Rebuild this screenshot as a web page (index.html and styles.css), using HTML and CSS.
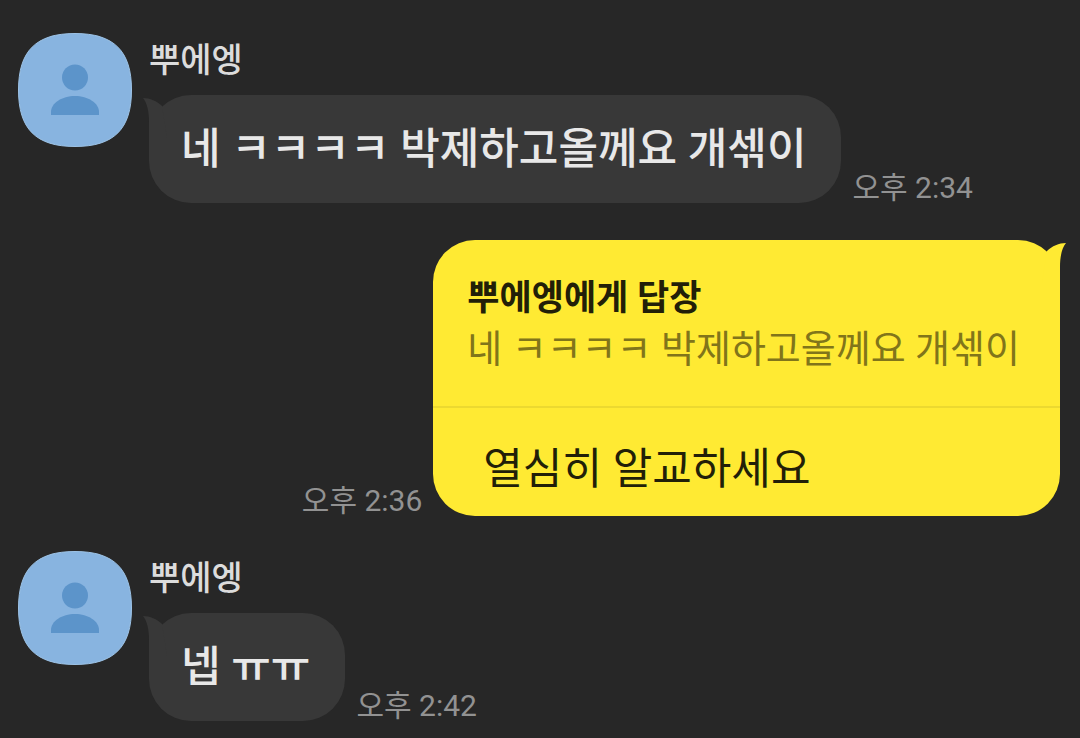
FILE: index.html
```html
<!DOCTYPE html>
<html lang="ko">

<head>
    <meta charset="UTF-8">
    <meta name="viewport" content="width=device-width, initial-scale=1.0">
    <title>뿌에엥</title>
    <link rel="stylesheet" href="styles.css">
</head>

<body>
    <main class="chat">
        <div class="message">
            <svg class="avatar" viewBox="0 0 114 114">
                <path class="avatar-bg" d="M57 .5C96 .5 113.500 18 113.500 57S96 113.500 57 113.500.5 96 .5 57 18 .5 57 .5z" />
                <circle class="avatar-person" cx="57" cy="44.500" r="13" />
                <path class="avatar-person" d="M33 82v-3C33 70 44 63 57 63s24 7 24 16v3z" />
            </svg>
            <div class="content">
                <div class="name">뿌에엥</div>
                <div class="line">
                    <div class="bubble">
                        <svg class="tail" viewBox="0 0 24 40">
                            <path d="M0 0C7 0 14 3 19 8L24 40H6V24C6 13 4 5 0 0z" />
                        </svg>
                        네 ㅋㅋㅋㅋ 박제하고올께요 개섺이
                    </div>
                    <time class="time">오후 2:34</time>
                </div>
            </div>
        </div>

        <div class="message mine">
            <div class="line">
                <time class="time">오후 2:36</time>
                <div class="bubble">
                    <svg class="tail" viewBox="0 0 24 40">
                        <path d="M24 0C17 0 10 3 5 8L0 40H18V24C18 13 20 5 24 0z" />
                    </svg>
                    <div class="reply">
                        <div class="reply-title">뿌에엥에게 답장</div>
                        <div class="reply-text">네 ㅋㅋㅋㅋ 박제하고올께요 개섺이</div>
                    </div>
                    <div class="answer">열심히 알교하세요</div>
                </div>
            </div>
        </div>

        <div class="message">
            <svg class="avatar" viewBox="0 0 114 114">
                <path class="avatar-bg" d="M57 .5C96 .5 113.500 18 113.500 57S96 113.500 57 113.500.5 96 .5 57 18 .5 57 .5z" />
                <circle class="avatar-person" cx="57" cy="44.500" r="13" />
                <path class="avatar-person" d="M33 82v-3C33 70 44 63 57 63s24 7 24 16v3z" />
            </svg>
            <div class="content">
                <div class="name">뿌에엥</div>
                <div class="line">
                    <div class="bubble">
                        <svg class="tail" viewBox="0 0 24 40">
                            <path d="M0 0C7 0 14 3 19 8L24 40H6V24C6 13 4 5 0 0z" />
                        </svg>
                        넵 ㅠㅠ
                    </div>
                    <time class="time">오후 2:42</time>
                </div>
            </div>
        </div>
    </main>
</body>

</html>
```
FILE: styles.css
```css
body {
    margin: 0;
    background-color: #272727;
    font-family: Roboto, "Noto Sans CJK KR", sans-serif;
}

.chat {
    padding: 33px 20px 17px 18px;
}

.message {
    display: flex;
    align-items: flex-start;
    gap: 17px;
}

.mine {
    justify-content: flex-end;
    margin: 37px 0 35px;
}

.avatar {
    flex: none;
    width: 114px;
    height: 114px;
}

.avatar-bg {
    fill: #88b4e0;
    stroke: #9dc3e6;
}

.avatar-person {
    fill: #5c94ca;
}

.name {
    margin-bottom: 8px;
    font-size: 34px;
    font-weight: 500;
    line-height: 54px;
    color: #dcdcdc;
}

.line {
    display: flex;
    align-items: flex-end;
    gap: 11px;
}

.bubble {
    position: relative;
    padding: 32px 35px 32px 32px;
    border-radius: 42px;
    background-color: #383838;
    color: #e8e8e8;
    font-size: 43px;
    font-weight: 500;
    line-height: 44px;
}

.tail {
    position: absolute;
    top: 3px;
    left: -6px;
    width: 24px;
    height: 40px;
    fill: #383838;
}

.time {
    flex: none;
    color: #929292;
    font-size: 30px;
    line-height: 30px;
}

.mine .bubble {
    padding: 0;
    background-color: #ffea33;
    color: #221f08;
    font-weight: 400;
}

.mine .tail {
    left: auto;
    right: -6px;
    fill: #ffea33;
}

.reply {
    padding: 33px 40px 32px 34px;
    border-bottom: 2px solid #ecd930;
}

.reply-title {
    font-size: 35px;
    font-weight: 700;
    line-height: 51px;
}

.reply-text {
    color: #81751a;
    font-size: 38px;
    line-height: 50px;
}

.answer {
    padding: 39px 50px 25px;
}
```
